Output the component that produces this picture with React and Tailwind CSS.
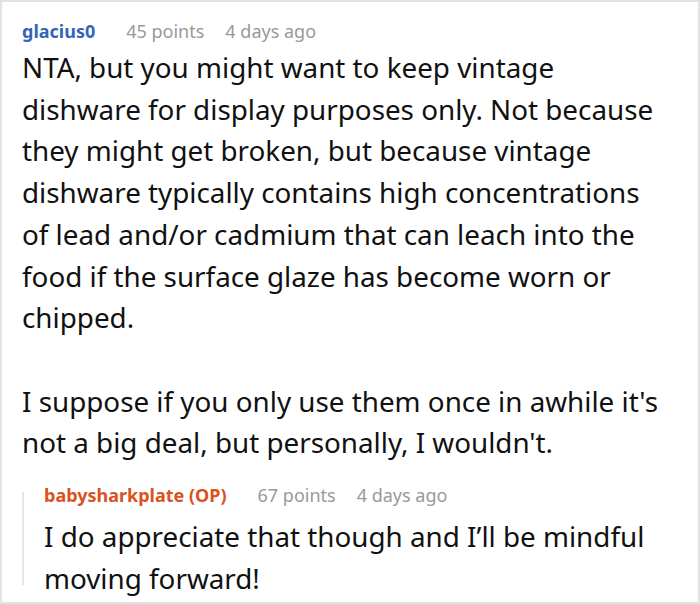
import React from 'react';

const Meta = ({ user, userClass, points, ago }) => (
  <div className="flex items-baseline text-[18px] leading-[24px]">
    <span className={`font-bold ${userClass}`}>{user}</span>
    <span className="ml-[31px] text-[#999]">{points}</span>
    <span className="ml-[21px] text-[#999]">{ago}</span>
  </div>
);

export default function App() {
  return (
    <div
      className="w-[700px] h-[604px] border-2 border-[#e2e2e2] bg-white overflow-hidden text-[#111]"
      style={{ fontFamily: '"Noto Sans", sans-serif' }}
    >
      <div className="pl-[20px] pr-[30px] pt-[17px]">
        <Meta user="glacius0" userClass="text-[#3565b5]" points="45 points" ago="4 days ago" />
        <div className="mt-[4px] text-[27.8px] leading-[41.7px]">
          <p>
            NTA, but you might want to keep vintage dishware for display purposes only. Not because
            they might get broken, but because vintage dishware typically contains high concentrations
            of lead and/or cadmium that can leach into the food if the surface glaze has become worn or
            chipped.
          </p>
          <p className="mt-[41.7px]">
            I suppose if you only use them once in awhile it's not a big deal, but personally, I wouldn't.
          </p>
        </div>
        <div className="mt-[19px] flex">
          <div className="w-[2px] shrink-0 bg-[#e6e6e6] mt-[9px] mb-[14px]" />
          <div className="pl-[20px]">
            <Meta user="babysharkplate (OP)" userClass="text-[#d9531e]" points="67 points" ago="4 days ago" />
            <p className="mt-[9px] text-[27.8px] leading-[41.7px]">
              I do appreciate that though and I’ll be mindful moving forward!
            </p>
          </div>
        </div>
      </div>
    </div>
  );
}
